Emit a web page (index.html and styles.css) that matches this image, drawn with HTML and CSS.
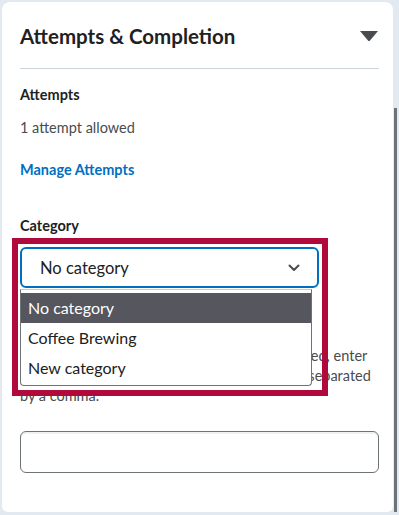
FILE: index.html
```html
<!DOCTYPE html>
<html lang="en">
<head>
    <meta charset="UTF-8">
    <meta name="viewport" content="width=device-width, initial-scale=1.0">
    <title>Attempts &amp; Completion</title>
    <link rel="stylesheet" href="styles.css">
</head>
<body>
    <div class="panel">
        <div class="panel-header">
            <h2>Attempts &amp; Completion</h2>
            <svg class="caret" width="18" height="10" viewBox="0 0 18 10">
                <path d="M0 0 H18 L10 9.5 Q9 10.5 8 9.5 Z" fill="#494c4e"/>
            </svg>
        </div>

        <div class="section">
            <div class="field-label">Attempts</div>
            <div class="field-text">1 attempt allowed</div>
            <a class="link" href="#">Manage Attempts</a>
        </div>

        <div class="section category">
            <div class="field-label">Category</div>
            <div class="select">
                <span>No category</span>
                <svg class="chevron" width="12" height="8" viewBox="0 0 12 8">
                    <path d="M1.5 1.5 L6 6 L10.5 1.5" fill="none" stroke="#494c4e" stroke-width="2" stroke-linecap="round" stroke-linejoin="round"/>
                </svg>
            </div>
            <p class="help">If a category that you need has not been created, enter<br>new category names into the text box below, separated<br>by a comma.</p>
            <div class="text-input"></div>

            <ul class="options">
                <li class="selected">No category</li>
                <li>Coffee Brewing</li>
                <li>New category</li>
            </ul>
            <div class="highlight"></div>
        </div>

        <div class="scroll-thumb"></div>
    </div>
</body>
</html>
```

FILE: styles.css
```css
body {
    margin: 0;
    background-color: #e3e9f1;
    font-family: Lato, "Open Sans", sans-serif;
    color: #202122;
}
.panel {
    position: relative;
    box-sizing: border-box;
    width: 391px;
    height: 510px;
    margin: 2px 0 0 2px;
    padding: 0 14px 0 18px;
    background-color: #fff;
    border-radius: 8px 8px 6px 6px;
}
.panel-header {
    display: flex;
    align-items: center;
    justify-content: space-between;
    height: 66px;
    border-bottom: 1px solid #cdd5dc;
}
.panel-header h2 {
    margin: 0;
    padding-top: 2px;
    font-size: 20.5px;
    font-weight: 700;
    line-height: 24px;
}
.caret {
    margin-right: 1px;
    margin-top: 2px;
}
.section {
    padding-top: 16px;
}
.field-label {
    font-size: 14.5px;
    font-weight: 700;
    line-height: 20px;
}
.field-text {
    margin-top: 13px;
    font-size: 14.5px;
    line-height: 20px;
    color: #494c4e;
}
.link {
    display: block;
    margin-top: 22px;
    font-size: 14.5px;
    font-weight: 700;
    line-height: 20px;
    color: #006fbf;
    text-decoration: none;
}
.category {
    position: relative;
    padding-top: 36px;
}
.select {
    display: flex;
    align-items: center;
    justify-content: space-between;
    box-sizing: border-box;
    height: 41px;
    margin-top: 11px;
    width: 299px;
    padding: 0 17px 0 18px;
    border: 2px solid #006fbf;
    border-radius: 6px;
    font-size: 16.5px;
}
.chevron {
    margin-top: 1px;
}
.help {
    margin: 58px 0 0;
    font-size: 14.5px;
    line-height: 20px;
    color: #494c4e;
    white-space: nowrap;
}
.text-input {
    box-sizing: border-box;
    height: 42px;
    margin-top: 25px;
    border: 1px solid #6e7376;
    border-radius: 6px;
    box-shadow: inset 0 2px 0 #f0f1f2;
}
.options {
    position: absolute;
    left: 0;
    top: 109px;
    box-sizing: border-box;
    width: 292px;
    height: 97px;
    margin: 0;
    padding: 3px 0;
    list-style: none;
    background-color: #fff;
    border: 1px solid #6e7376;
    border-top-color: #c9cbcd;
    border-radius: 0 0 4px 4px;
}
.options li {
    height: 30px;
    padding-left: 7px;
    font-size: 16px;
    line-height: 30px;
}
.options li.selected {
    background-color: #55565e;
    color: #fff;
}
.highlight {
    position: absolute;
    left: -8px;
    top: 58px;
    box-sizing: border-box;
    width: 316px;
    height: 158px;
    border: 6px solid #b00a3c;
}
.scroll-thumb {
    position: absolute;
    right: -4px;
    top: 106px;
    width: 3px;
    height: 407px;
    background-color: #6e7376;
}
```
